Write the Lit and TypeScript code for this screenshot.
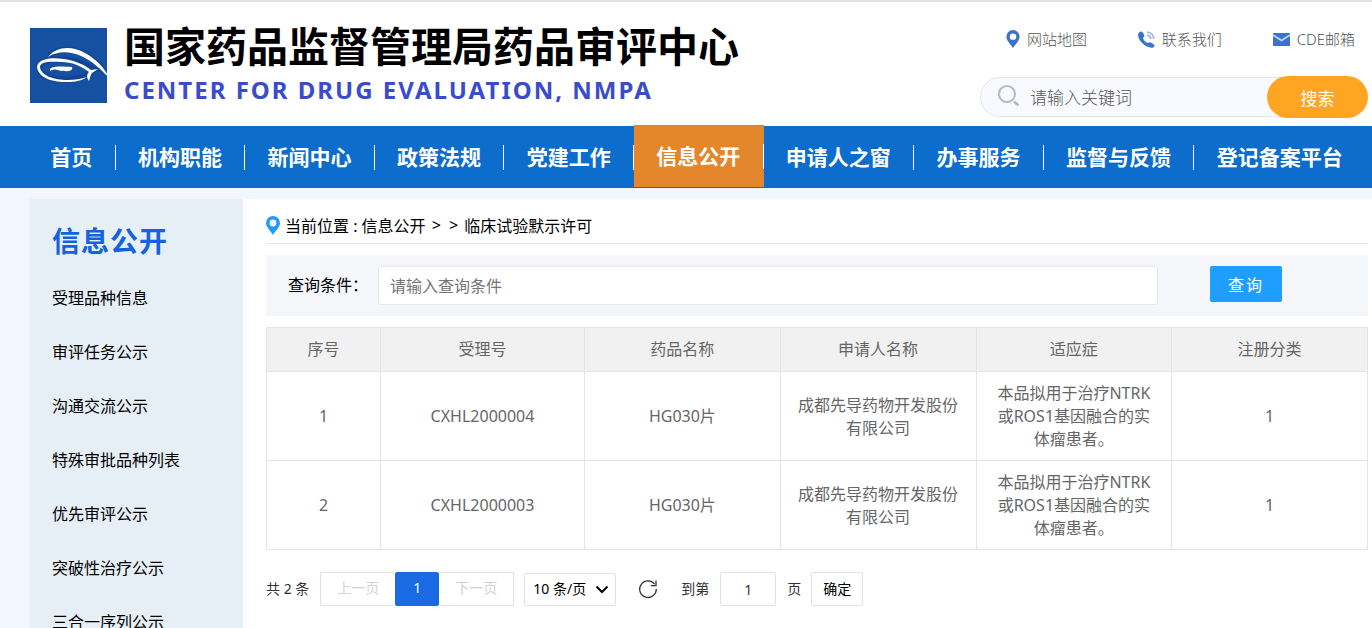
import { LitElement, html, css, svg } from "lit";
import { customElement, state } from "lit/decorators.js";

interface Row {
  acceptNo: string;
  drug: string;
  applicant: string;
  indication: string;
  category: string;
}

const NAV = [
  "首页", "机构职能", "新闻中心", "政策法规", "党建工作",
  "信息公开", "申请人之窗", "办事服务", "监督与反馈", "登记备案平台",
];

const SIDE = [
  "受理品种信息", "审评任务公示", "沟通交流公示", "特殊审批品种列表",
  "优先审评公示", "突破性治疗公示", "三合一序列公示",
];

const HEADS = ["序号", "受理号", "药品名称", "申请人名称", "适应症", "注册分类"];

const ROWS: Row[] = ["CXHL2000004", "CXHL2000003"].map((acceptNo) => ({
  acceptNo,
  drug: "HG030片",
  applicant: "成都先导药物开发股份有限公司",
  indication: "本品拟用于治疗NTRK或ROS1基因融合的实体瘤患者。",
  category: "1",
}));

const pin = svg`<path fill-rule="evenodd" d="M7 0a7 7 0 0 1 7 7c0 4-4.200 7.500-7 12C4.200 14.500 0 11 0 7a7 7 0 0 1 7-7zm0 3.600a3.400 3.400 0 1 0 0 6.800a3.400 3.400 0 0 0 0-6.800z"/>`;

@customElement("cde-header")
export class CdeHeader extends LitElement {
  static styles = css`
    :host { display: block; background: #fff; border-top: 2px solid #e2e2e2; }
    .bar { display: flex; justify-content: space-between; height: 124px; box-sizing: border-box; padding-left: 30px; }
    .brand { display: flex; gap: 14px; padding-top: 22px; color: inherit; text-decoration: none; }
    .logo { width: 80px; height: 75px; display: block; margin-top: 4px; }
    .names { display: flex; flex-direction: column; white-space: nowrap; }
    .zh { margin: 0; font-size: 41px; line-height: 44px; font-weight: 700; color: #000; }
    .en { margin: 8px 0 0; font-size: 24px; line-height: 28px; font-weight: 700; letter-spacing: 2px; color: #3a4bcb; }
    .tools { display: flex; flex-direction: column; width: 388px; padding: 25px 4px 0 0; }
    .links { display: flex; justify-content: space-between; padding: 0 13px 0 26px; height: 24px; }
    .links a { display: flex; align-items: center; gap: 7px; font-size: 15px; line-height: 24px; color: #555; font-weight: 300; text-decoration: none; }
    .links svg { fill: #3f73cb; display: block; }
    .search { display: flex; align-items: center; margin-top: 25px; height: 42px; position: relative; }
    .field { flex: 1; display: flex; align-items: center; gap: 10px; height: 40px; box-sizing: border-box; margin-right: 34px; padding-left: 17px; border: 1px solid #e3e5e8; border-radius: 20px; background: #f9faff; }
    .field svg { margin-bottom: 4px; }
    .field input { flex: 1; min-width: 0; border: 0; outline: 0; background: none; padding: 0; font: inherit; font-size: 17px; font-weight: 300; color: #555; }
    .field input::placeholder { color: #555; opacity: 1; }
    .search button { position: absolute; right: 0; top: 0; width: 101px; height: 42px; border: 0; border-radius: 21px; background: #ffa522; color: #fff; font: inherit; font-size: 17px; padding: 0; cursor: pointer; }
  `;
  render() {
    return html`
      <header class="bar">
        <a class="brand" href="#">
          <svg class="logo" viewBox="0 0 80 75" role="img" aria-label="CDE">
            <rect width="77" height="75" fill="#1550a3" />
            <g fill="none" stroke="#0b3274" stroke-width="6" opacity=".35">
              <path d="M19 28C32 18 55 18 74 44" />
              <path d="M9 40C10 28 45 28 64 42C50 56 9 54 9 40z" />
            </g>
            <path fill="#fff" d="M18 29C26 19 41 17 55 25C66 31 74 39 80 51C71 41 62 33 51 28C39 23 28 23 18 29z" />
            <path fill="#fff" fill-rule="evenodd" d="M7 39C8 31 20 29 34 31C46 33 55 37 61 42L68 41L62 45C60 48 60 50 59 53C56 49 57 46 59 44C51 38 42 34 31 34C18 33 10 34 10 39C11 48 25 52 37 52C45 52 51 51 57 49C50 54 41 54 35 54C21 54 8 49 7 39z" />
            <path fill="#fff" d="M20 43C19 38 28 38 42 39C43 41 41 43 38 43C36 44 34 42 31 43C27 41 23 41 20 43z" />
          </svg>
          <span class="names">
            <span class="zh">国家药品监督管理局药品审评中心</span>
            <span class="en">CENTER FOR DRUG EVALUATION, NMPA</span>
          </span>
        </a>
        <div class="tools">
          <nav class="links" aria-label="快捷入口">
            <a href="#"><svg width="14" height="18" viewBox="0 0 14 19">${pin}</svg>网站地图</a>
            <a href="#"><svg width="17" height="17" viewBox="0 0 17 17">
              <path d="M1.300 1.200C2.800 0 4.200.3 5.200 2l1 2.200C6.800 5.600 4.800 6.200 5.200 7.400c.8 2 2.400 3.600 4.200 4.400c1.200.4 1.800-1 3-.6l3.600 2.200c1 .8.500 2.300-.8 3C9.500 18.500-1.500 9.500.3 2.800z"/>
              <path d="M9 1.200c3.800.2 6.600 3 6.800 6.800M8.800 4.200c2.200.2 3.800 1.700 4 4" fill="none" stroke="#9db7e4" stroke-width="1.800"/>
            </svg>联系我们</a>
            <a href="#"><svg width="17" height="13" viewBox="0 0 17 13">
              <path d="M0 0h17v13H0z"/><path d="M0 2l8.500 5.500L17 2" fill="none" stroke="#c4d7f5" stroke-width="1.600"/>
            </svg>CDE邮箱</a>
          </nav>
          <form class="search" @submit=${(e: Event) => e.preventDefault()}>
            <label class="field">
              <svg width="22" height="23" viewBox="0 0 22 23" fill="none" stroke="#bbb">
                <circle cx="9" cy="10" r="8" stroke-width="2.200"/>
                <path d="M16 17.500l4.500 4" stroke-width="3"/>
              </svg>
              <input type="text" aria-label="关键词" placeholder="请输入关键词" />
            </label>
            <button type="submit">搜索</button>
          </form>
        </div>
      </header>
    `;
  }
}

@customElement("cde-nav")
export class CdeNav extends LitElement {
  static styles = css`
    :host { display: block; background: #0d6dcd; }
    .list { display: flex; list-style: none; margin: 0; padding: 0 7px 0 28px; height: 62px; }
    .item { flex: 1 0 auto; display: flex; align-items: center; }
    .link { flex: 1; height: 25px; line-height: 24px; padding: 0 21px; border-right: 1px solid #fff; text-align: center; white-space: nowrap; font-size: 21px; font-weight: 700; color: #fff; text-decoration: none; }
    .item:last-child .link { border-right: 0; }
    .active { background: #e3862c; margin-top: -1px; height: 62px; }
  `;
  render() {
    return html`<nav aria-label="主导航"><ul class="list">
      ${NAV.map((n) => html`<li class="item ${n === "信息公开" ? "active" : ""}"><a class="link" href="#">${n}</a></li>`)}
    </ul></nav>`;
  }
}

@customElement("cde-sidebar")
export class CdeSidebar extends LitElement {
  static styles = css`
    :host { display: block; background: #e6eef6; }
    .title { margin: 0; padding: 24px 22px 12px; font-size: 28px; line-height: 36px; font-weight: 700; letter-spacing: 1px; color: #1463dc; }
    .list { list-style: none; margin: 0; padding: 0; }
    .link { display: block; padding: 0 22px; line-height: 54px; font-size: 16px; color: #000; text-decoration: none; }
  `;
  render() {
    return html`<aside>
      <h2 class="title">信息公开</h2>
      <ul class="list">${SIDE.map((s) => html`<li><a class="link" href="#">${s}</a></li>`)}</ul>
    </aside>`;
  }
}

@customElement("cde-table")
export class CdeTable extends LitElement {
  static styles = css`
    :host { display: block; }
    .table { width: 100%; table-layout: fixed; border-collapse: collapse; font-size: 16px; line-height: 23px; color: #666; text-align: center; }
    .no { width: 114px; }
    .code { width: 204px; }
    th, td { border: 1px solid #e4e4e4; padding: 10px 15px 9px; font-weight: inherit; }
    th { background: #f1f1f1; padding: 10px 15px; }
  `;
  render() {
    return html`<table class="table">
      <colgroup><col class="no" /><col class="code" /><col /><col /><col /><col /></colgroup>
      <thead><tr>${HEADS.map((h) => html`<th scope="col">${h}</th>`)}</tr></thead>
      <tbody>${ROWS.map((r, i) => html`<tr>
        <td>${i + 1}</td><td>${r.acceptNo}</td><td>${r.drug}</td><td>${r.applicant}</td><td>${r.indication}</td><td>${r.category}</td>
      </tr>`)}</tbody>
    </table>`;
  }
}

@customElement("cde-pager")
export class CdePager extends LitElement {
  @state() private page = "1";
  static styles = css`
    :host { display: flex; align-items: center; height: 34px; font-size: 14px; line-height: 18px; color: #333; white-space: nowrap; }
    button, input, select { font: inherit; box-sizing: border-box; height: 34px; margin: 0; border: 1px solid #e2e2e2; background: #fff; border-radius: 2px; padding: 0; }
    .pages { display: flex; margin-left: 11px; }
    .step { width: 75px; color: #d2d2d2; border-radius: 0; padding-bottom: 2px; }
    .prev { border-right: 0; }
    .next { border-left: 0; }
    .current { width: 44px; background: #1a6ae4; border-color: #1a6ae4; color: #fff; border-radius: 2px; padding-bottom: 2px; }
    .size { position: relative; display: flex; margin-left: 10px; }
    .size select { width: 92px; height: 33px; padding-left: 8px; appearance: none; color: #000; }
    .size svg { position: absolute; right: 7px; top: 12px; pointer-events: none; }
    .refresh { display: flex; align-items: center; justify-content: center; width: 20px; margin: 0 23px 0 22px; border: 0; background: none; }
    .jump { display: flex; align-items: center; gap: 11px; }
    .jump input { width: 56px; text-align: center; color: #333; }
    .go { width: 52px; margin-left: 10px; color: #000; }
  `;
  render() {
    return html`
      <span>共 2 条</span>
      <div class="pages">
        <button class="step prev" disabled>上一页</button>
        <button class="current" aria-current="page">1</button>
        <button class="step next" disabled>下一页</button>
      </div>
      <div class="size">
        <select aria-label="每页条数"><option>10 条/页</option><option>20 条/页</option><option>50 条/页</option></select>
        <svg width="14" height="9" viewBox="0 0 14 9" fill="none" stroke="#000" stroke-width="2"><path d="M1.500 1.500L7 7l5.500-5.500"/></svg>
      </div>
      <button class="refresh" aria-label="刷新">
        <svg width="20" height="20" viewBox="0 0 20 20" fill="none" stroke="#333" stroke-width="1.300"><path d="M18.300 10A8.300 8.300 0 1 1 16.500 5M18 1.500v5.200h-5.200"/></svg>
      </button>
      <label class="jump">到第<input type="text" .value=${this.page} @input=${(e: Event) => (this.page = (e.target as HTMLInputElement).value)} />页</label>
      <button class="go">确定</button>
    `;
  }
}

@customElement("app-root")
export class AppRoot extends LitElement {
  static styles = css`
    :host { display: flex; flex-direction: column; min-height: 100vh; background: #f2f6fe; font-family: "Noto Sans", "Noto Sans CJK SC", sans-serif; }
    cde-header, cde-nav { flex: none; }
    .body { flex: 1; display: grid; grid-template-columns: 213px minmax(0, 1fr); margin-top: 11px; padding-left: 30px; }
    .main { background: #fff; padding: 0 4px 0 23px; }
    .crumbs { display: flex; align-items: center; height: 45px; padding-top: 8px; box-sizing: border-box; border-bottom: 1px solid #e6e6e6; font-size: 16px; color: #000; }
    .crumbs svg { fill: #1e9bff; margin-right: 5px; }
    .crumbs a { color: inherit; text-decoration: none; }
    .crumbs .sep { margin: 0 6px; }
    .query { display: flex; align-items: center; height: 61px; margin: 11px 0; padding: 0 86px 0 22px; background: #f4f6fa; font-size: 16px; }
    .query label { width: 90px; flex: none; padding-bottom: 3px; }
    .query input { flex: 1; min-width: 0; height: 39px; box-sizing: border-box; padding: 0 11px; border: 1px solid #e4e6e9; border-radius: 3px; background: #fff; font: inherit; outline: 0; }
    .query input::placeholder { color: #757575; opacity: 1; }
    .query button { width: 72px; height: 36px; margin: 0 0 4px 52px; padding: 0; border: 0; border-radius: 2px; background: #1e9fff; color: #fff; font: inherit; letter-spacing: 2px; }
    cde-pager { margin-top: 22px; }
  `;
  render() {
    return html`
      <cde-header></cde-header>
      <cde-nav></cde-nav>
      <div class="body">
        <cde-sidebar></cde-sidebar>
        <main class="main">
          <div class="crumbs">
            <svg width="14" height="19" viewBox="0 0 14 19">${pin}</svg>
            <span>当前位置 : <a href="#">信息公开</a></span>
            <span class="sep">&gt;&nbsp; &gt;</span>
            <span>临床试验默示许可</span>
          </div>
          <form class="query" @submit=${(e: Event) => e.preventDefault()}>
            <label for="cond">查询条件：</label>
            <input id="cond" type="text" placeholder="请输入查询条件" />
            <button type="submit">查询</button>
          </form>
          <cde-table></cde-table>
          <cde-pager></cde-pager>
        </main>
      </div>
    `;
  }
}
